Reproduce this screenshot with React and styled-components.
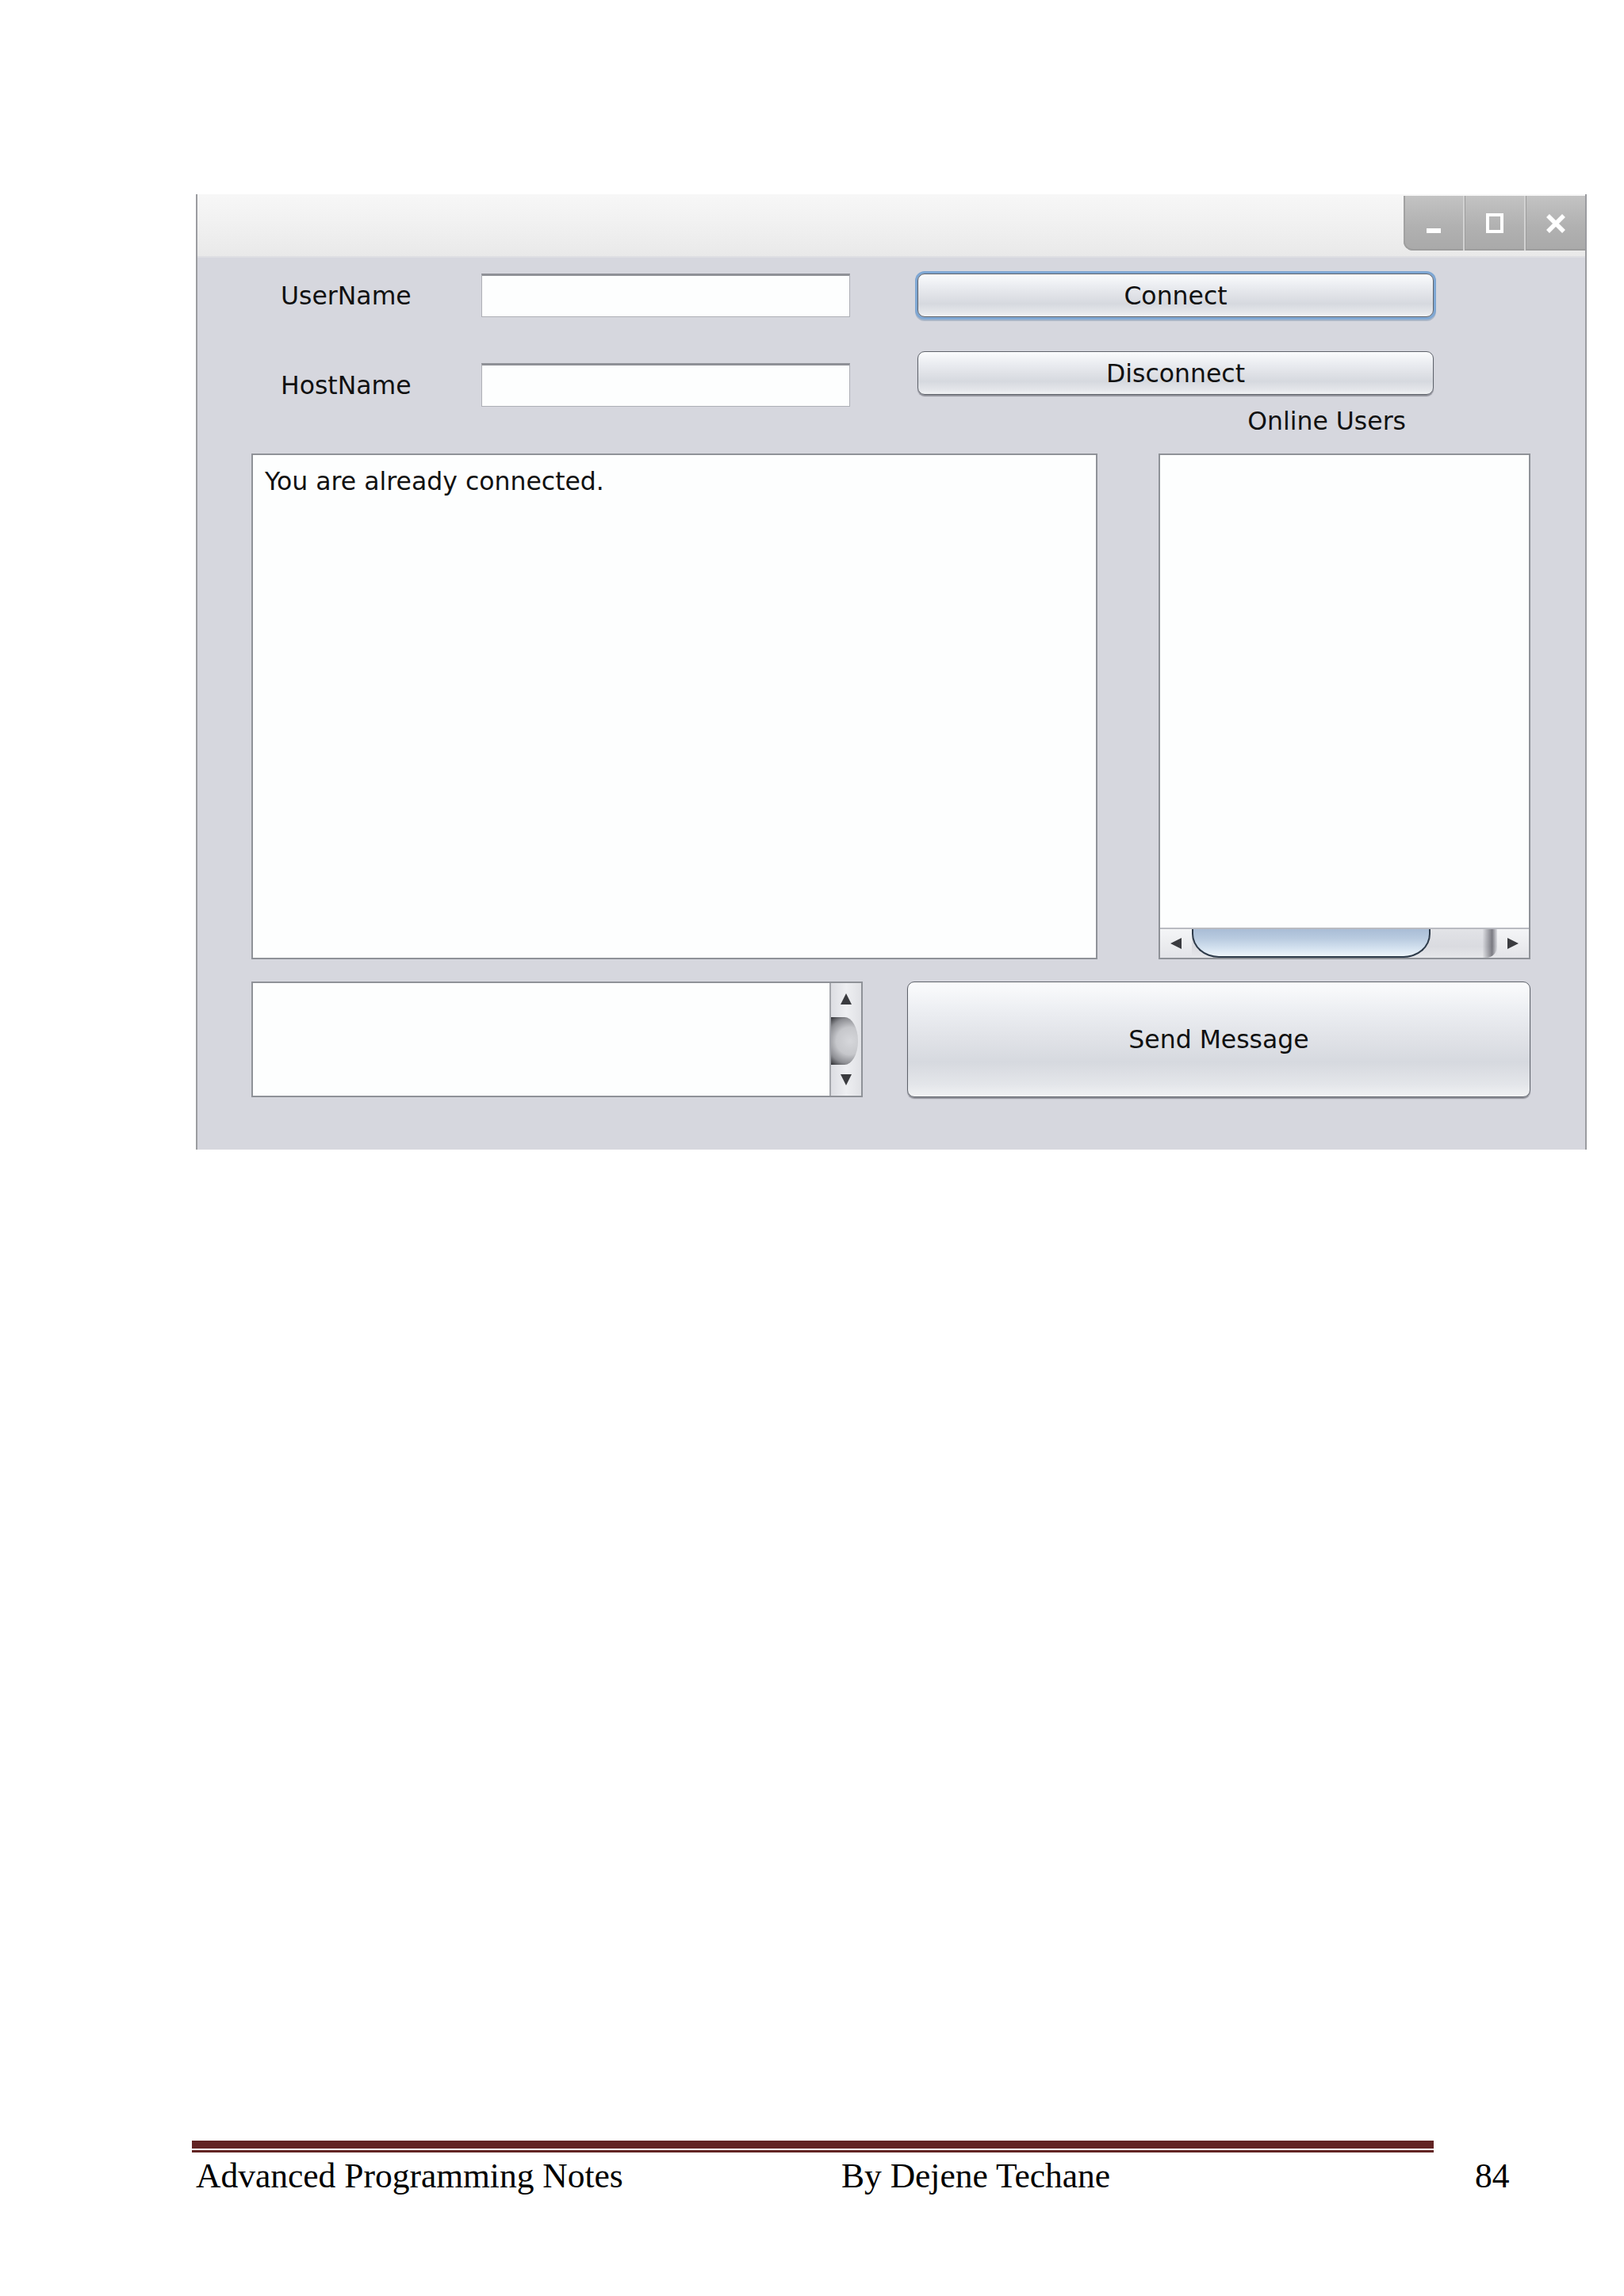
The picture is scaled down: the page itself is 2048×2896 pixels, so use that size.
import React from 'react';
import styled, { createGlobalStyle } from 'styled-components';

const GlobalStyle = createGlobalStyle`
  html, body {
    margin: 0;
    padding: 0;
    background: #ffffff;
  }
`;

const Page = styled.div`
  width: 2048px;
  min-height: 2896px;
  box-sizing: border-box;
  padding: 245px 0 0 247px;
  display: flex;
  flex-direction: column;
`;

const Window = styled.div`
  width: 1754px;
  box-sizing: border-box;
  border-left: 2px solid #9b9ca0;
  border-right: 2px solid #9b9ca0;
  display: flex;
  flex-direction: column;
  font-family: "DejaVu Sans", sans-serif;
  font-size: 31.5px;
  color: #111;
`;

const TitleBar = styled.div`
  height: 80px;
  box-sizing: border-box;
  background: linear-gradient(#f7f7f7, #efefef 60%, #e9e9e9);
  border-bottom: 2px solid #dedfe3;
  display: flex;
  justify-content: flex-end;
  align-items: flex-start;
`;

const WinButtons = styled.div`
  margin-top: 2px;
  height: 69px;
  display: flex;
  border-bottom-left-radius: 12px;
  overflow: hidden;
  background: linear-gradient(#c3c3c3, #b1b1b1 55%, #a9a9a9);
  box-shadow: inset 0 -2px 0 #9d9d9d, inset 2px 0 0 #a2a2a2;
`;

const WinButton = styled.div`
  width: 75px;
  display: flex;
  align-items: center;
  justify-content: center;
  border-left: ${(p) => (p.first ? 'none' : '2px solid #d2d2d2')};
  box-shadow: ${(p) => (p.first ? 'none' : 'inset 1px 0 0 #9c9c9c')};
`;

const Body = styled.div`
  background: #d6d7de;
  padding: 0 69px 66px 68px;
  display: flex;
  flex-direction: column;
`;

const Form = styled.div`
  display: flex;
  align-items: flex-start;
  padding-left: 37px;
`;

const Fields = styled.div`
  display: flex;
  flex-direction: column;
  gap: 58px;
  padding-top: 20px;
`;

const FieldRow = styled.div`
  display: flex;
  align-items: center;
`;

const Label = styled.div`
  width: 253px;
  line-height: 38px;
`;

const TextField = styled.div`
  width: 465px;
  height: 55px;
  box-sizing: border-box;
  background: #fdfefe;
  border: 1px solid #aeb0b6;
  border-top: 3px solid #8f9197;
`;

const Buttons = styled.div`
  margin-left: 85px;
  width: 651px;
  display: flex;
  flex-direction: column;
  padding-top: 20px;
`;

const Button = styled.div`
  height: ${(p) => p.h || 55}px;
  width: ${(p) => (p.w ? `${p.w}px` : 'auto')};
  box-sizing: border-box;
  border: 1.5px solid #5f636b;
  border-radius: 9px;
  background: linear-gradient(#fbfcfd 0%, #eceef2 25%, #e0e2e7 50%, #d6d9df 70%, #e4e6ea 90%, #f1f2f4 100%);
  box-shadow: ${(p) =>
    p.focused
      ? '0 0 0 3px #7fa7d3, 0 2px 0 3px rgba(90, 120, 160, 0.35)'
      : '0 2px 1px rgba(60, 60, 70, 0.45)'};
  display: flex;
  align-items: center;
  justify-content: center;
  margin-top: ${(p) => p.mt || 0}px;
`;

const OnlineLabel = styled.div`
  margin-top: 15px;
  line-height: 36px;
  text-align: right;
  padding-right: 35px;
`;

const MainRow = styled.div`
  margin-top: 23px;
  display: flex;
  gap: 77px;
  height: 638px;
`;

const ChatArea = styled.div`
  width: 1067px;
  box-sizing: border-box;
  background: #fdfefe;
  border: 2px solid #8f9298;
  padding: 14px 15px;
  line-height: 38px;
`;

const UserList = styled.div`
  width: 469px;
  box-sizing: border-box;
  background: #fdfefe;
  border: 2px solid #8f9298;
  display: flex;
  flex-direction: column;
  justify-content: flex-end;
`;

const HScroll = styled.div`
  height: 36px;
  display: flex;
  align-items: stretch;
  background: linear-gradient(#e2e3e7, #dadbe0 60%, #e6e7ea);
  border-top: 2px solid #b9bbc1;
`;

const ArrowCell = styled.div`
  width: 40px;
  display: flex;
  align-items: center;
  justify-content: center;
  background: linear-gradient(#f4f5f7, #e3e4e8);
`;

const HThumb = styled.div`
  width: 301px;
  box-sizing: border-box;
  border: 2px solid #2e3b4a;
  border-top: none;
  border-radius: 0 0 34px 34px / 0 0 30px 30px;
  background: linear-gradient(#a9bdd6 0%, #b9cbe0 35%, #d3e1ef 70%, #eef5fb 100%);
`;

const Track = styled.div`
  flex: 1;
  display: flex;
  justify-content: flex-end;
`;

const TrackCap = styled.div`
  width: 18px;
  background: linear-gradient(90deg, rgba(70, 70, 80, 0.03), rgba(40, 40, 50, 0.55) 65%, rgba(200, 200, 210, 0.1));
  border-radius: 0 0 14px 0;
`;

const BottomRow = styled.div`
  margin-top: 28px;
  display: flex;
  gap: 56px;
  height: 146px;
`;

const MessageBox = styled.div`
  width: 771px;
  box-sizing: border-box;
  background: #fdfefe;
  border: 2px solid #8f9298;
  display: flex;
  justify-content: flex-end;
`;

const VScroll = styled.div`
  width: 38px;
  display: flex;
  flex-direction: column;
  background: linear-gradient(90deg, #dcdde2, #eeeff2 50%, #e0e1e5);
  border-left: 2px solid #a5a7ad;
`;

const VArrow = styled.div`
  height: 40px;
  display: flex;
  align-items: center;
  justify-content: center;
`;

const VThumb = styled.div`
  margin-top: 4px;
  height: 60px;
  width: 34px;
  border-radius: 0 50% 50% 0 / 0 50% 50% 0;
  background: radial-gradient(circle at 70% 50%, #d6d7db 0%, #c6c7cb 45%, #8d8e93 75%, #2c2d31 100%);
`;

const Spacer = styled.div`
  flex: 1;
`;

const Footer = styled.div`
  margin-top: 1250px;
  width: 1566px;
  margin-left: -5px;
`;

const RuleThick = styled.div`
  height: 10px;
  background: #622423;
`;

const RuleThin = styled.div`
  margin-top: 2px;
  height: 3px;
  background: #622423;
`;

const FooterText = styled.div`
  display: flex;
  margin-top: 4px;
  padding-left: 5px;
  font-family: "Liberation Serif", "Times New Roman", serif;
  font-size: 43.5px;
  line-height: 50px;
  color: #000;
  white-space: nowrap;
`;

const FooterCell = styled.span`
  width: ${(p) => p.w}px;
  flex: none;
`;

const Tri = ({ dir, size = 14 }) => {
  const pts = {
    up: '0,14 7,0 14,14',
    down: '0,0 14,0 7,14',
    left: '14,0 14,14 0,7',
    right: '0,0 0,14 14,7',
  }[dir];
  return (
    <svg width={size} height={size} viewBox="0 0 14 14">
      <polygon points={pts} fill="#3a3b3f" />
    </svg>
  );
};

function App() {
  return (
    <>
      <GlobalStyle />
      <Page>
        <Window>
          <TitleBar>
            <WinButtons>
              <WinButton first>
                <svg width="24" height="30" viewBox="0 0 24 30">
                  <rect x="3" y="21" width="18" height="6" fill="#fff" />
                </svg>
              </WinButton>
              <WinButton>
                <svg width="24" height="26" viewBox="0 0 24 26">
                  <rect x="3" y="2" width="18" height="21" fill="none" stroke="#fff" strokeWidth="4" />
                </svg>
              </WinButton>
              <WinButton>
                <svg width="26" height="26" viewBox="0 0 26 26">
                  <path d="M3 3 L23 23 M23 3 L3 23" stroke="#fff" strokeWidth="5.5" />
                </svg>
              </WinButton>
            </WinButtons>
          </TitleBar>
          <Body>
            <Form>
              <Fields>
                <FieldRow>
                  <Label>UserName</Label>
                  <TextField />
                </FieldRow>
                <FieldRow>
                  <Label>HostName</Label>
                  <TextField />
                </FieldRow>
              </Fields>
              <Buttons>
                <Button focused>Connect</Button>
                <Button mt={43}>Disconnect</Button>
                <OnlineLabel>Online Users</OnlineLabel>
              </Buttons>
            </Form>
            <MainRow>
              <ChatArea>You are already connected.</ChatArea>
              <UserList>
                <HScroll>
                  <ArrowCell>
                    <Tri dir="left" />
                  </ArrowCell>
                  <HThumb />
                  <Track>
                    <TrackCap />
                  </Track>
                  <ArrowCell>
                    <Tri dir="right" />
                  </ArrowCell>
                </HScroll>
              </UserList>
            </MainRow>
            <BottomRow>
              <MessageBox>
                <VScroll>
                  <VArrow>
                    <Tri dir="up" />
                  </VArrow>
                  <VThumb />
                  <Spacer />
                  <VArrow>
                    <Tri dir="down" />
                  </VArrow>
                </VScroll>
              </MessageBox>
              <Button h={146} w={786}>Send Message</Button>
            </BottomRow>
          </Body>
        </Window>
        <Footer>
          <RuleThick />
          <RuleThin />
          <FooterText>
            <FooterCell w={814}>Advanced Programming Notes</FooterCell>
            <FooterCell w={799}>By Dejene Techane</FooterCell>
            <FooterCell w={80}>84</FooterCell>
          </FooterText>
        </Footer>
      </Page>
    </>
  );
}

export default App;
